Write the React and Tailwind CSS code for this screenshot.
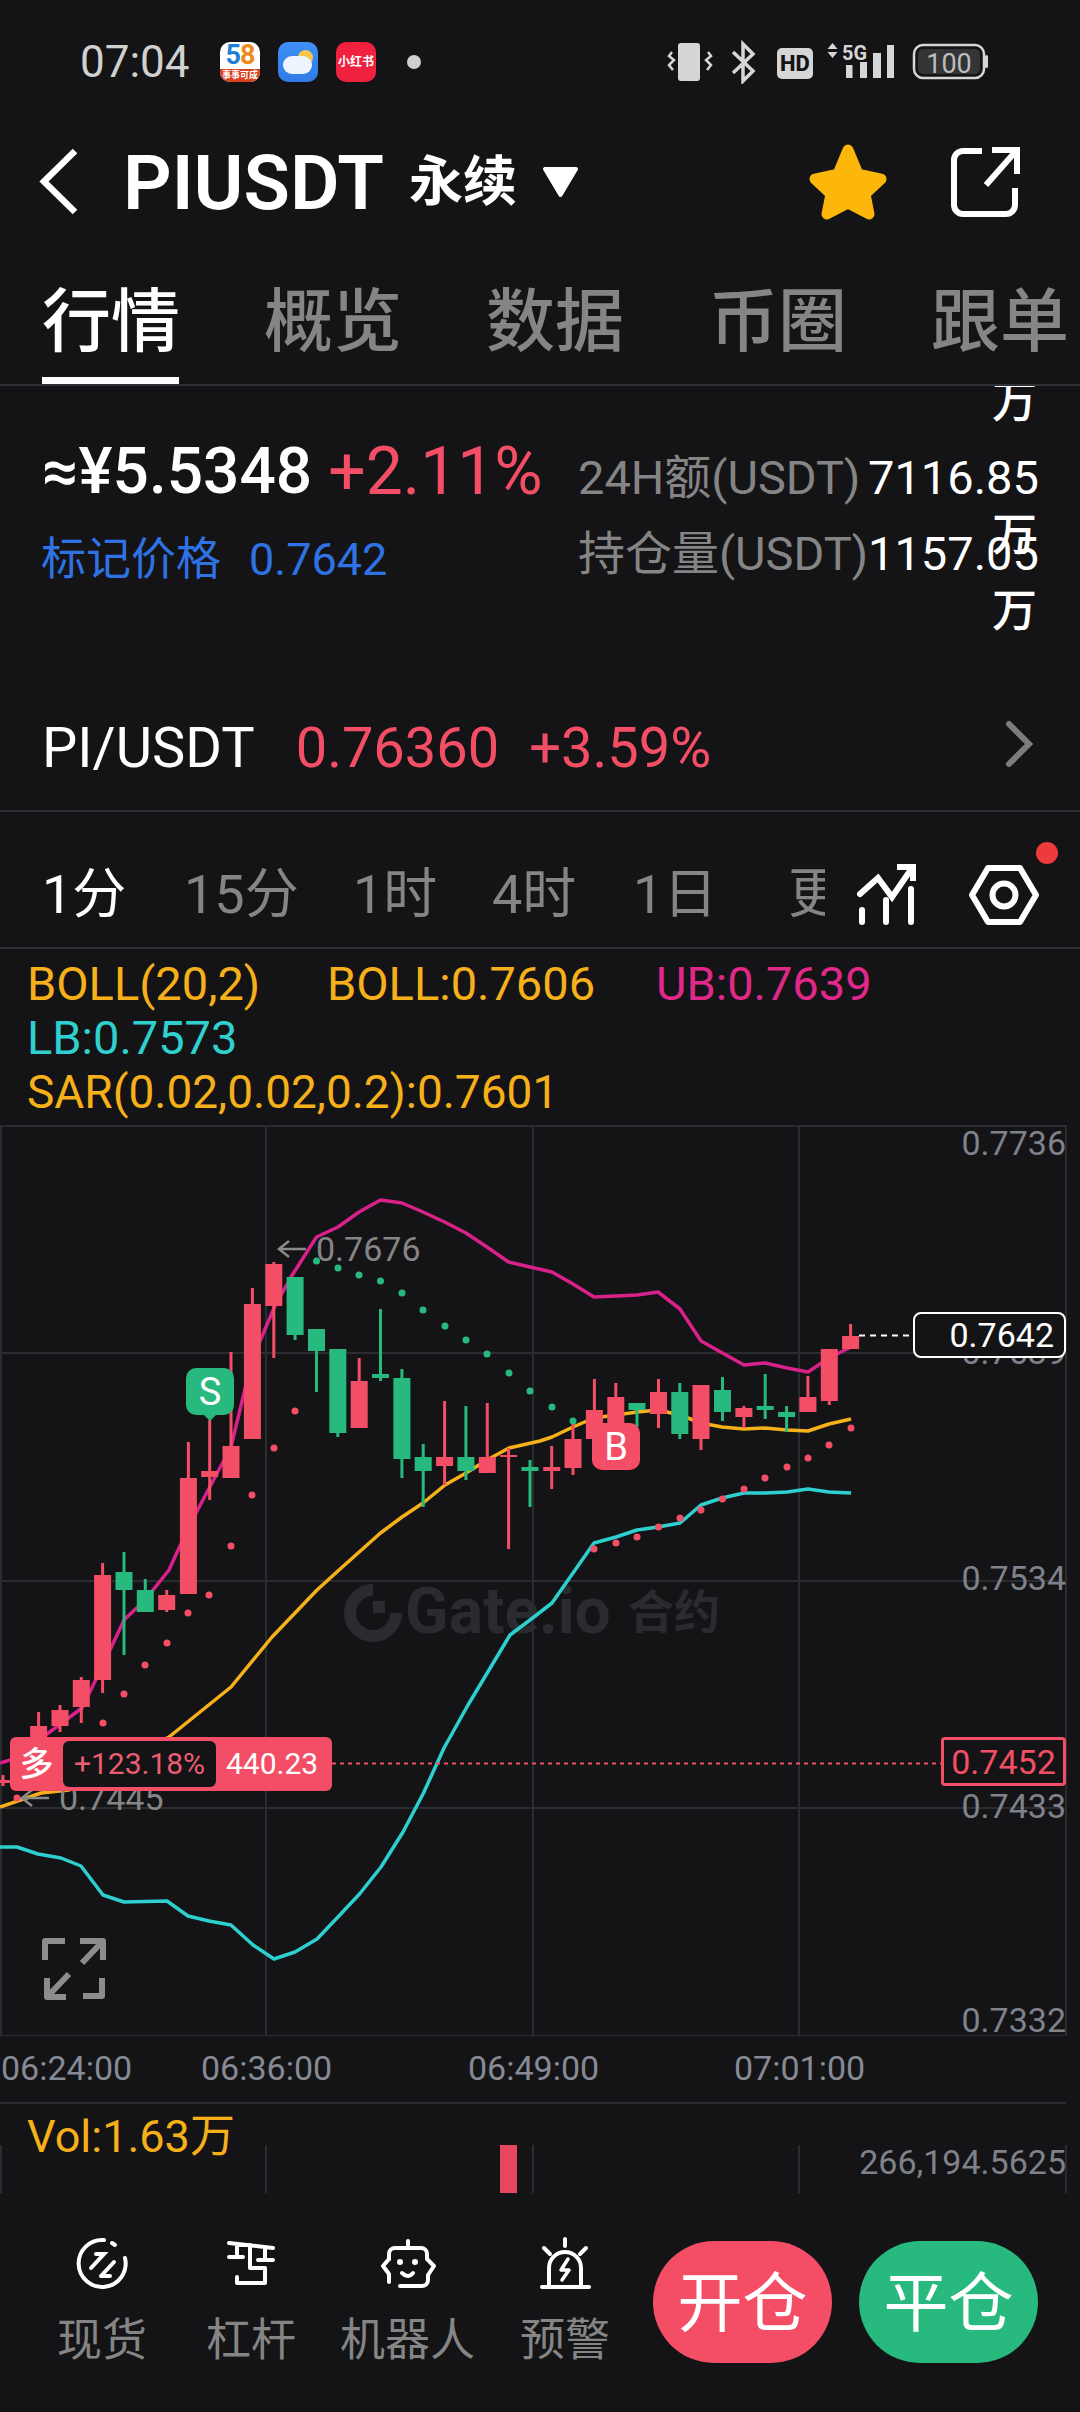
import React from "react";

const RED = "#f44e66";
const GREEN = "#27b97d";

const candles = [
  [3, 1775, 1780, 1783, 1786, "r"],
  [38.6, 1712, 1726, 1745, 1750, "r"],
  [60, 1705, 1710, 1726, 1732, "r"],
  [81.3, 1677, 1680, 1707, 1723, "r"],
  [102.6, 1563, 1575, 1680, 1693, "r"],
  [124, 1552, 1572, 1590, 1655, "g"],
  [145.3, 1579, 1590, 1612, 1612, "g"],
  [166.7, 1590, 1595, 1610, 1612, "r"],
  [188.4, 1442, 1478, 1594, 1594, "r"],
  [209.7, 1420, 1471, 1477, 1500, "r"],
  [231, 1352, 1446, 1478, 1478, "r"],
  [252.4, 1288, 1304, 1439, 1439, "r"],
  [273.8, 1262, 1264, 1306, 1358, "r"],
  [295.1, 1277, 1277, 1335, 1340, "g"],
  [316.5, 1329, 1329, 1351, 1392, "g"],
  [337.8, 1349, 1349, 1433, 1437, "g"],
  [359.2, 1358, 1381, 1428, 1428, "r"],
  [380.5, 1309, 1374, 1378, 1381, "g"],
  [401.9, 1369, 1378, 1459, 1478, "g"],
  [423.2, 1444, 1457, 1471, 1507, "g"],
  [444.6, 1401, 1457, 1466, 1485, "r"],
  [465.9, 1406, 1457, 1471, 1480, "g"],
  [487.3, 1403, 1457, 1473, 1473, "r"],
  [508.6, 1448, 1455, 1457, 1549, "r"],
  [530, 1460, 1467, 1471, 1507, "g"],
  [551.7, 1446, 1467, 1471, 1489, "r"],
  [573, 1423, 1439, 1468, 1475, "r"],
  [594.4, 1379, 1410, 1439, 1439, "r"],
  [615.8, 1383, 1397, 1423, 1423, "r"],
  [637, 1403, 1403, 1410, 1427, "g"],
  [658.5, 1379, 1392, 1414, 1428, "r"],
  [679.8, 1383, 1392, 1434, 1439, "g"],
  [701, 1385, 1385, 1439, 1450, "r"],
  [722.5, 1377, 1390, 1412, 1421, "g"],
  [743.9, 1406, 1408, 1417, 1428, "r"],
  [765.2, 1374, 1406, 1410, 1419, "g"],
  [786.6, 1406, 1412, 1417, 1432, "g"],
  [807.9, 1376, 1397, 1412, 1412, "r"],
  [829.3, 1349, 1349, 1401, 1405, "r"],
  [850.6, 1324, 1336, 1349, 1349, "r"],
];

const ub = "0,1763 17,1758 43,1737 82,1708 103,1665 124,1620 145,1600 169,1570 179,1548 196,1513 231,1447 252,1360 274,1308 291,1277 316.5,1237 338,1227 359,1212 380.5,1200 402,1203 423,1212 444.6,1222 466,1233 487,1247 508.6,1262 530,1267 552,1272 573,1284 594,1297 616,1296 637,1295 658,1292 680,1309 701,1341 722.5,1353 744,1365 765,1363 787,1368 808,1372 829,1358 851,1347";
const boll = "0,1807 41,1793 69,1790 110,1765 169,1737 231,1687 272,1637 317,1590 339,1570 380.5,1533 402,1517 423,1503 445,1485 466,1473 487,1460 509,1448 540,1441 552,1437 573,1427 594,1418 616,1415 637,1412 658,1410 680,1415 701,1423 722,1427 744,1429 765,1428 787,1430 808,1431 829,1424 851,1419";
const lb = "0,1847 17,1847 38,1854 61,1858 81,1866 103,1895 124,1902 167,1901 188,1916 209,1921 231,1925 253,1945 274,1959 295,1952 317,1939 337,1918 359.5,1894 381,1867 403,1832 423.5,1793 444,1748 468,1705 489,1670 510,1635 530,1620 552,1603 573,1573 594,1543 616,1537 637,1530 658,1527 680,1523 701,1505 722,1498 744,1493 765,1493 787,1492 808,1489 829,1492 851,1493";

const greenDots = [[316.5,1261],[338,1268],[359,1275],[380.5,1281],[402,1293],[423,1310],[445,1326],[466,1340],[487,1354],[509,1373],[530,1391],[552,1407],[573,1421]];
const redDots = [[17,1798],[103,1723],[124,1694],[145,1665],[167,1643],[188,1613],[209,1595],[231,1546],[252,1495],[274,1448],[295,1411],[594,1549],[616,1543],[637,1537],[658.5,1527],[680,1518],[701,1510],[722.5,1499],[744,1489],[765,1478],[787,1467],[808,1458],[829,1445],[851,1428]];

function StatusIcons() {
  return (
    <svg width="340" height="44" viewBox="660 40 340 44" fill="none">
      <rect x="678" y="43" width="22" height="38" rx="3" fill="#d6d6d6" />
      <path d="M672 52l-3 4 5 4-5 5 4 5M708 52l3 4-5 4 5 5-4 5" stroke="#d6d6d6" strokeWidth="2.5" />
      <path d="M733 52L753 71L743 81V44L753 54L733 73" stroke="#d6d6d6" strokeWidth="3.5" />
      <rect x="777" y="48" width="36" height="31" rx="5" fill="#d6d6d6" />
      <text x="795" y="71" textAnchor="middle" fontSize="22" fontWeight="800" fill="#141416" fontFamily="Roboto, sans-serif">HD</text>
      <path d="M832.5 43l5 6h-10zM832.5 58l5-6h-10z" fill="#d6d6d6" />
      <text x="842" y="60" fontSize="21" fontWeight="700" fill="#d6d6d6" fontFamily="Roboto, sans-serif" textLength="25" lengthAdjust="spacingAndGlyphs">5G</text>
      <rect x="846" y="65" width="6.5" height="13" fill="#d6d6d6" />
      <rect x="860" y="62" width="7" height="16" fill="#d6d6d6" />
      <rect x="873" y="53" width="8" height="25" fill="#d6d6d6" />
      <rect x="887" y="45" width="7" height="33" fill="#d6d6d6" />
      <rect x="914" y="45" width="70" height="33" rx="9" stroke="#d6d6d6" strokeWidth="2.5" />
      <rect x="918" y="49" width="62" height="25" rx="5" fill="#333436" />
      <rect x="985" y="55" width="3" height="13" rx="1.5" fill="#d6d6d6" />
      <text x="949" y="73" textAnchor="middle" fontSize="27" fill="#bdbdbd" fontFamily="Roboto, sans-serif">100</text>
    </svg>
  );
}

function BackIcon() {
  return (
    <svg width="40" height="68" viewBox="39 148 40 68" fill="none">
      <path d="M75 151L44 181.5L75 212" stroke="#fff" strokeWidth="6.5" />
    </svg>
  );
}

function StarIcon() {
  return (
    <svg width="80" height="78" viewBox="809 141 80 78" fill="#fdb60a" stroke="#fdb60a" strokeWidth="11" strokeLinejoin="round">
      <path d="M849 148L859 172L882 177L866 192L870 212L849 201L828 212L832 192L816 177L839 172Z" />
    </svg>
  );
}

function ShareIcon() {
  return (
    <svg width="72" height="72" viewBox="948 145 72 72" fill="none" stroke="#fff" strokeWidth="6">
      <path d="M982 150H963a9 9 0 0 0-9 9V204a9 9 0 0 0 9 9H1006a9 9 0 0 0 9-9V187" />
      <path d="M986 184L1016 150M992 149H1017V173" />
    </svg>
  );
}

function IndicatorIcon() {
  return (
    <svg width="62" height="64" viewBox="856 863 62 64" fill="none" stroke="#fff" strokeWidth="6" strokeLinecap="round">
      <path d="M860 894L878 878L892 897L912 868" />
      <path d="M897 867H913V881" strokeLinecap="butt" />
      <path d="M862 910V922M886 900V922M911 889V922" />
    </svg>
  );
}

function HexIcon() {
  return (
    <svg width="72" height="64" viewBox="968 861 72 64" fill="none" stroke="#fff" strokeWidth="6">
      <path d="M972 893L988 866H1020L1036 893L1020 920H988Z" strokeLinejoin="round" />
      <circle cx="1004" cy="893" r="11.5" />
    </svg>
  );
}

function SpotIcon() {
  return (
    <svg width="60" height="56" viewBox="72 2236 60 56" fill="none" stroke="#fff" strokeWidth="4" strokeLinecap="round">
      <path d="M104 2240A23.5 23.5 0 1 0 125 2258" />
      <path d="M112 2243L115 2245" />
      <path d="M91 2268L104 2254H96M101 2276H110M101 2276L114 2262" />
    </svg>
  );
}

function LeverIcon() {
  return (
    <svg width="60" height="56" viewBox="221 2236 60 56" fill="none" stroke="#fff" strokeWidth="4" strokeLinecap="round" strokeLinejoin="round">
      <path d="M229 2243L273 2248M237 2245V2257M229 2257H243M265 2248V2260M258 2260H273" />
      <path d="M250 2245V2268H265V2283H237V2277" />
    </svg>
  );
}

function RobotIcon() {
  return (
    <svg width="60" height="56" viewBox="378 2236 60 56" fill="none" stroke="#fff" strokeWidth="4" strokeLinecap="round" strokeLinejoin="round">
      <path d="M408 2241V2247" />
      <path d="M389 2259V2254a6 6 0 0 1 6-6H421a6 6 0 0 1 6 6V2259L434 2266L428 2275V2280a6 6 0 0 1-6 6H400" />
      <path d="M389 2259L383 2266L389 2274V2282" />
      <circle cx="400" cy="2262" r="3" fill="#fff" stroke="none" />
      <circle cx="415" cy="2262" r="3" fill="#fff" stroke="none" />
      <path d="M402 2273Q408 2279 413 2273" />
    </svg>
  );
}

function AlertIcon() {
  return (
    <svg width="60" height="56" viewBox="535 2236 60 56" fill="none" stroke="#fff" strokeWidth="4" strokeLinecap="round" strokeLinejoin="round">
      <path d="M565 2239V2246M544 2248L550 2254M586 2248L580 2254" />
      <path d="M549 2286V2268a16 16 0 0 1 32 0V2286" />
      <path d="M542 2287H589" />
      <path d="M568 2259L561 2270H569L562 2280" strokeWidth="3.5" />
    </svg>
  );
}

function Chart() {
  return (
    <svg className="absolute left-0 top-0" width="1080" height="911" viewBox="0 1125 1080 911" fill="none">
      <g stroke="#2b2c2f" strokeWidth="2">
        <path d="M0 1126H1066M0 1353H1066M0 1581H1066M0 1808H1066M0 2036H1066" />
        <path d="M1 1125V2036M266 1125V2036M533 1125V2036M799 1125V2036M1066 1125V2036" />
      </g>
      <polyline points={ub} stroke="#d8218a" strokeWidth="3.5" strokeLinejoin="round" />
      <polyline points={boll} stroke="#f5b01a" strokeWidth="3.5" strokeLinejoin="round" />
      <polyline points={lb} stroke="#2dcfcf" strokeWidth="3.5" strokeLinejoin="round" />
      {candles.map(([x, hi, top, bot, lo, c]) => (
        <g key={x} fill={c === "r" ? RED : GREEN}>
          <rect x={x - 1.5} y={hi} width="3" height={lo - hi} />
          <rect x={x - 8.5} y={top} width="17" height={bot - top} />
        </g>
      ))}
      {greenDots.map(([x, y]) => <circle key={x} cx={x} cy={y} r="3.5" fill={GREEN} />)}
      {redDots.map(([x, y]) => <circle key={x} cx={x} cy={y} r="3.5" fill={RED} />)}
      <path d="M203 1414H217L210 1421Z" fill={GREEN} />
      <path d="M609 1424H623L616 1417Z" fill={RED} />
      <path d="M859 1335.5H913" stroke="#fff" strokeWidth="2" strokeDasharray="6 5" />
      <path d="M332 1763.5H941" stroke={RED} strokeWidth="2" strokeDasharray="4 4" />
      <path d="M373 1590A23 23 0 1 0 396 1613" stroke="#292b31" strokeWidth="12" />
      <rect x="373" y="1601" width="12" height="12" fill="#292b31" />
      <path d="M306 1249H279M289 1241L279 1249L289 1257" stroke="#8a8a8a" strokeWidth="2.5" />
      <path d="M49 1798H22M32 1790L22 1798L32 1806" stroke="#8a8a8a" strokeWidth="2.5" />
      <path d="M45 1960V1941H65M80 1941H103V1960M103 1941L82 1963M47 1978V1997H66M47 1997L69 1974M102 1978V1996H83" stroke="#8c8c8c" strokeWidth="6" strokeLinejoin="round" />
    </svg>
  );
}

export default function App() {
  return (
    <div className="w-[1080px] h-[2412px] bg-[#141416] overflow-hidden flex flex-col text-white [font-family:Roboto,'Noto_Sans_CJK_SC',sans-serif]">
      {/* status bar */}
      <div className="h-[124px] flex items-center pl-[80px] pr-[80px] shrink-0">
        <span className="text-[44px] leading-none text-[#d0d0d0] w-[108px]">07:04</span>
        <div className="ml-[32px] w-[40px] h-[40px] rounded-[10px] overflow-hidden bg-white flex flex-col items-center">
          <div className="h-[27px] text-[27px] leading-[27px] font-bold tracking-[-1px]">
            <span className="text-[#1f7fd6]">5</span>
            <span className="text-[#f08a1d]">8</span>
          </div>
          <div className="w-full h-[13px] bg-[#d9401e] text-[9px] leading-[13px] text-center text-white font-bold whitespace-nowrap">事事可成</div>
        </div>
        <div className="relative ml-[18px] w-[40px] h-[40px] rounded-[10px] overflow-hidden bg-gradient-to-b from-[#3f90f5] to-[#2f7ce8]">
          <div className="absolute left-[20px] top-[8px] w-[15px] h-[15px] rounded-full bg-[#f7c64a]" />
          <div className="absolute left-[5px] top-[14px] w-[29px] h-[18px] rounded-[9px] bg-[#eef4fb]" />
        </div>
        <div className="ml-[18px] w-[40px] h-[40px] rounded-[10px] bg-[#f0203f] flex items-center justify-center text-[12px] leading-none font-bold text-white whitespace-nowrap">小红书</div>
        <div className="ml-[31px] w-[14px] h-[14px] rounded-full bg-[#cfcfcf]" />
        <div className="ml-auto flex">
          <StatusIcons />
        </div>
      </div>

      {/* header */}
      <div className="h-[116px] shrink-0 flex items-center pl-[39px] pr-[60px]">
        <BackIcon />
        <span className="ml-[44px] text-[76px] leading-none font-semibold mt-[2px]">PIUSDT</span>
        <span className="ml-[25px] text-[54px] leading-none font-bold mt-[2px]">永续</span>
        <svg className="ml-[24px]" width="40" height="34" viewBox="0 0 40 34" fill="#fff" stroke="#fff" strokeWidth="4" strokeLinejoin="round">
          <path d="M4 4H35L19.5 30Z" />
        </svg>
        <div className="ml-auto flex items-center gap-[60px]">
          <StarIcon />
          <ShareIcon />
        </div>
      </div>

      {/* tabs */}
      <div className="h-[146px] shrink-0 border-b-2 border-[#2f3033] pl-[42px] pt-[49px] flex items-start text-[69px] leading-[68px] font-medium text-[#858585] whitespace-nowrap">
        <div className="flex flex-col w-[137px] text-white">
          <span className="whitespace-nowrap">行情</span>
          <div className="mt-[20px] h-[7px] bg-white" />
        </div>
        <span className="ml-[85px]">概览</span>
        <span className="ml-[84px]">数据</span>
        <span className="ml-[85px]">币圈</span>
        <span className="ml-[84px]">跟单</span>
      </div>

      {/* stats */}
      <div className="relative h-[300px] shrink-0 overflow-hidden flex">
        <div className="w-[578px] pl-[42px] pt-[46px] flex flex-col">
          <div className="flex items-center h-[80px] text-[64px] leading-[80px] font-medium whitespace-nowrap">
            <span>≈¥5.5348</span>
            <span className="ml-[16px] text-[66px] text-[#f44e66] font-normal">+2.11%</span>
          </div>
          <div className="mt-[20px] ml-[-1px] h-[56px] flex items-center text-[45px] leading-[56px] text-[#2f72e4] whitespace-nowrap">
            <span>标记价格</span>
            <span className="ml-[28px]">0.7642</span>
          </div>
        </div>
        <div className="pt-[64px] flex flex-col text-[47px] leading-[56px] whitespace-nowrap">
          <div className="flex h-[56px]">
            <span className="w-[290px] text-[#858585]">24H额(USDT)</span>
            <span className="w-[170px] text-right">7116.85</span>
          </div>
          <div className="flex h-[56px] mt-[20px]">
            <span className="w-[290px] text-[#858585]">持仓量(USDT)</span>
            <span className="w-[170px] text-right">1157.05</span>
          </div>
        </div>
        <span className="absolute right-[43px] top-[-6px] text-[45px] leading-[46px] font-medium">万</span>
        <span className="absolute right-[43px] top-[127px] text-[45px] leading-[46px] font-medium">万</span>
        <span className="absolute right-[43px] top-[203px] text-[45px] leading-[46px] font-medium">万</span>
      </div>

      {/* spot row */}
      <div className="h-[126px] shrink-0 border-b-2 border-[#2f3033] flex items-center pl-[42px] pr-[46px] text-[56px] leading-none whitespace-nowrap">
        <span>PI/USDT</span>
        <span className="ml-[41px] text-[#f44e66]">0.76360</span>
        <span className="ml-[30px] text-[#f44e66]">+3.59%</span>
        <svg className="ml-auto mb-[8px]" width="30" height="48" viewBox="0 0 30 48" fill="none" stroke="#7c7c7c" strokeWidth="6" strokeLinecap="round">
          <path d="M5 4L25 24L5 44" />
        </svg>
      </div>

      {/* timeframes */}
      <div className="relative h-[137px] shrink-0 border-b-2 border-[#2f3033] flex items-center pt-[30px] pl-[42px] text-[54px] leading-none text-[#858585] whitespace-nowrap">
        <span className="text-white w-[85px]">1分</span>
        <span className="ml-[57px] w-[114px]">15分</span>
        <span className="ml-[55px] w-[84px]">1时</span>
        <span className="ml-[55px] w-[84px]">4时</span>
        <span className="ml-[57px] w-[84px]">1日</span>
        <span className="ml-[71px] w-[37px] overflow-hidden">更多</span>
        <div className="ml-[31px] flex">
          <IndicatorIcon />
        </div>
        <div className="ml-[50px] flex">
          <HexIcon />
        </div>
        <div className="absolute left-[1036px] top-[30px] w-[22px] h-[22px] rounded-full bg-[#ee3a3a]" />
      </div>

      {/* legend */}
      <div className="h-[176px] shrink-0 pt-[8px] pl-[27px] text-[47px] leading-[54px] whitespace-nowrap text-[#f5b01a]">
        <div className="flex h-[54px]">
          <span className="w-[236px]">BOLL(20,2)</span>
          <span className="ml-[64px] w-[267px]">BOLL:0.7606</span>
          <span className="ml-[62px] text-[#e0288b]">UB:0.7639</span>
        </div>
        <div className="h-[54px] text-[#2fd0cd]">LB:0.7573</div>
        <div className="h-[54px] text-[46px]">SAR(0.02,0.02,0.2):0.7601</div>
      </div>

      {/* chart */}
      <div className="relative h-[911px] shrink-0 overflow-hidden">
        <div className="absolute left-[405px] top-[487px] -translate-y-1/2 text-[64px] leading-none font-bold text-[#292b31]">Gate.io</div>
        <div className="absolute left-[628px] top-[487px] -translate-y-1/2 text-[46px] leading-none font-bold text-[#292b31]">合约</div>
        <Chart />

        <div className="absolute right-[14px] top-[18px] -translate-y-1/2 text-[34px] leading-none text-[#7f828a]">0.7736</div>
        <div className="absolute right-[14px] top-[227px] -translate-y-1/2 text-[34px] leading-none text-[#7f828a]">0.7639</div>
        <div className="absolute right-[14px] top-[453px] -translate-y-1/2 text-[34px] leading-none text-[#7f828a]">0.7534</div>
        <div className="absolute right-[14px] top-[681px] -translate-y-1/2 text-[34px] leading-none text-[#7f828a]">0.7433</div>
        <div className="absolute right-[14px] top-[895px] -translate-y-1/2 text-[34px] leading-none text-[#7f828a]">0.7332</div>

        <div className="absolute left-[316px] top-[124px] -translate-y-1/2 text-[34px] leading-none text-[#858585]">0.7676</div>
        <div className="absolute left-[59px] top-[673px] -translate-y-1/2 text-[34px] leading-none text-[#858585]">0.7445</div>

        <div className="absolute left-[186px] top-[243px] w-[48px] h-[47px] rounded-[10px] bg-[#27b97d] flex items-center justify-center text-[38px] leading-none text-white">S</div>
        <div className="absolute left-[592px] top-[298px] w-[48px] h-[47px] rounded-[10px] bg-[#f44e66] flex items-center justify-center text-[38px] leading-none text-white">B</div>

        <div className="absolute left-[913px] top-[187px] w-[153px] h-[46px] box-border rounded-[8px] border-2 border-white bg-[#141416] flex items-center justify-end pr-[10px] text-[34px] leading-none text-white">0.7642</div>

        <div className="absolute left-[10px] top-[612px] w-[322px] h-[54px] rounded-[6px] bg-[#f44e66] flex items-center text-[30px] leading-none whitespace-nowrap">
          <span className="w-[53px] text-center text-[34px] font-medium">多</span>
          <div className="h-[46px] w-[153px] rounded-[6px] bg-[#141416] flex items-center justify-center text-[#ec5d72]">+123.18%</div>
          <span className="ml-[10px]">440.23</span>
        </div>

        <div className="absolute left-[941px] top-[612px] w-[125px] h-[49px] box-border rounded-[4px] border-[3px] border-[#f44e66] bg-[#141416] flex items-center justify-center text-[34px] leading-none text-[#f44e66]">0.7452</div>
      </div>

      {/* time axis */}
      <div className="relative h-[68px] w-[1066px] shrink-0 box-border border-b-2 border-[#2b2c2f] flex items-center text-[34px] leading-none text-[#868a94] whitespace-nowrap">
        <span className="absolute left-[1px] top-[32px] -translate-y-1/2">06:24:00</span>
        <span className="absolute left-[201px] top-[32px] -translate-y-1/2">06:36:00</span>
        <span className="absolute left-[468px] top-[32px] -translate-y-1/2">06:49:00</span>
        <span className="absolute left-[734px] top-[32px] -translate-y-1/2">07:01:00</span>
      </div>

      {/* volume */}
      <div className="relative h-[89px] shrink-0 pt-[6px] pl-[27px] text-[45px] leading-[54px] text-[#f5b01a] whitespace-nowrap">
        Vol:1.63万
        <div className="absolute left-[0px] top-[41px] w-[2px] h-[48px] bg-[#2b2c2f]" />
        <div className="absolute left-[265px] top-[41px] w-[2px] h-[48px] bg-[#2b2c2f]" />
        <div className="absolute left-[532px] top-[41px] w-[2px] h-[48px] bg-[#2b2c2f]" />
        <div className="absolute left-[798px] top-[41px] w-[2px] h-[48px] bg-[#2b2c2f]" />
        <div className="absolute left-[1065px] top-[41px] w-[2px] h-[48px] bg-[#2b2c2f]" />
        <div className="absolute left-[500px] top-[41px] w-[17px] h-[48px] bg-[#e8465f]" />
        <div className="absolute right-[14px] top-[58px] -translate-y-1/2 text-[34px] leading-none text-[#7f828a]">266,194.5625</div>
      </div>

      {/* bottom nav */}
      <div className="flex-1 flex items-start pt-[43px] pl-[57px] text-[45px] leading-[50px] text-[#858585] whitespace-nowrap">
        <div className="flex flex-col items-center w-[90px]">
          <SpotIcon />
          <span className="mt-[24px]">现货</span>
        </div>
        <div className="flex flex-col items-center w-[90px] ml-[59px]">
          <LeverIcon />
          <span className="mt-[24px]">杠杆</span>
        </div>
        <div className="flex flex-col items-center w-[135px] ml-[44px]">
          <RobotIcon />
          <span className="mt-[24px]">机器人</span>
        </div>
        <div className="flex flex-col items-center w-[90px] ml-[45px]">
          <AlertIcon />
          <span className="mt-[24px]">预警</span>
        </div>
        <div className="ml-[43px] mt-[5px] w-[179px] h-[122px] rounded-full bg-[#f44e66] flex items-center justify-center pt-[4px] text-[65px] leading-none text-white">开仓</div>
        <div className="ml-[27px] mt-[5px] w-[179px] h-[122px] rounded-full bg-[#27b97d] flex items-center justify-center pt-[4px] text-[65px] leading-none text-white">平仓</div>
      </div>
    </div>
  );
}
